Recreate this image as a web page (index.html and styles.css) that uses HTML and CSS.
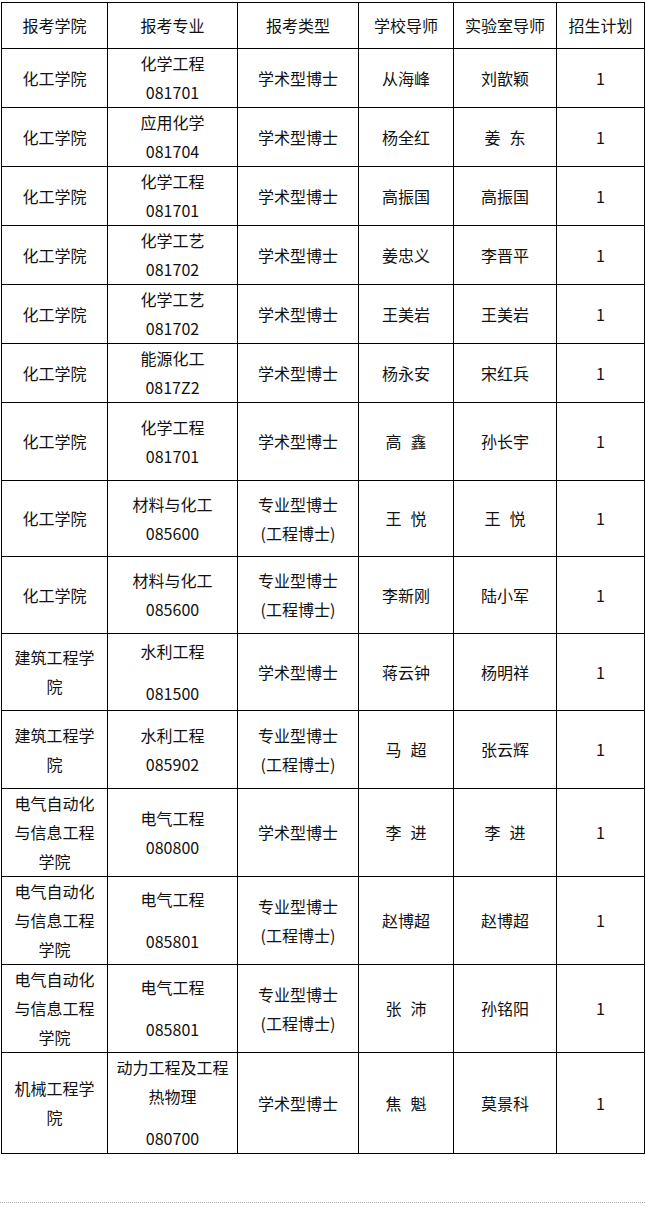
FILE: index.html
```html
<!DOCTYPE html>
<html lang="zh-CN">
<head>
<meta charset="utf-8">
<title>招生计划</title>
<link rel="stylesheet" href="styles.css">
</head>
<body>
<div class="page">
<table class="plan">
  <colgroup>
    <col class="c1"><col class="c2"><col class="c3"><col class="c4"><col class="c5"><col class="c6">
  </colgroup>
  <thead>
    <tr class="h-head">
      <th>报考学院</th><th>报考专业</th><th>报考类型</th><th>学校导师</th><th>实验室导师</th><th>招生计划</th>
    </tr>
  </thead>
  <tbody>
    <tr class="h-a"><td>化工学院</td><td>化学工程<br>081701</td><td>学术型博士</td><td>从海峰</td><td>刘歆颖</td><td>1</td></tr>
    <tr class="h-a"><td>化工学院</td><td>应用化学<br>081704</td><td>学术型博士</td><td>杨全红</td><td>姜<span class="sp"> </span>东</td><td>1</td></tr>
    <tr class="h-a"><td>化工学院</td><td>化学工程<br>081701</td><td>学术型博士</td><td>高振国</td><td>高振国</td><td>1</td></tr>
    <tr class="h-a"><td>化工学院</td><td>化学工艺<br>081702</td><td>学术型博士</td><td>姜忠义</td><td>李晋平</td><td>1</td></tr>
    <tr class="h-a"><td>化工学院</td><td>化学工艺<br>081702</td><td>学术型博士</td><td>王美岩</td><td>王美岩</td><td>1</td></tr>
    <tr class="h-a"><td>化工学院</td><td>能源化工<br>0817Z2</td><td>学术型博士</td><td>杨永安</td><td>宋红兵</td><td>1</td></tr>
    <tr class="h-b"><td>化工学院</td><td>化学工程<br>081701</td><td>学术型博士</td><td>高<span class="sp"> </span>鑫</td><td>孙长宇</td><td>1</td></tr>
    <tr class="h-c"><td>化工学院</td><td>材料与化工<br>085600</td><td>专业型博士<br>(工程博士)</td><td>王<span class="sp"> </span>悦</td><td>王<span class="sp"> </span>悦</td><td>1</td></tr>
    <tr class="h-d"><td>化工学院</td><td>材料与化工<br>085600</td><td>专业型博士<br>(工程博士)</td><td>李新刚</td><td>陆小军</td><td>1</td></tr>
    <tr class="h-d"><td>建筑工程学院</td><td>水利工程<div class="gap"></div>081500</td><td>学术型博士</td><td>蒋云钟</td><td>杨明祥</td><td>1</td></tr>
    <tr class="h-b"><td>建筑工程学院</td><td>水利工程<br>085902</td><td>专业型博士<br>(工程博士)</td><td>马<span class="sp"> </span>超</td><td>张云辉</td><td>1</td></tr>
    <tr class="h-e"><td>电气自动化与信息工程学院</td><td>电气工程<br>080800</td><td>学术型博士</td><td>李<span class="sp"> </span>进</td><td>李<span class="sp"> </span>进</td><td>1</td></tr>
    <tr class="h-f"><td>电气自动化与信息工程学院</td><td>电气工程<div class="gap"></div>085801</td><td>专业型博士<br>(工程博士)</td><td>赵博超</td><td>赵博超</td><td>1</td></tr>
    <tr class="h-e"><td>电气自动化与信息工程学院</td><td>电气工程<div class="gap"></div>085801</td><td>专业型博士<br>(工程博士)</td><td>张<span class="sp"> </span>沛</td><td>孙铭阳</td><td>1</td></tr>
    <tr class="h-g"><td>机械工程学院</td><td>动力工程及工程热物理<div class="gap"></div>080700</td><td>学术型博士</td><td>焦<span class="sp"> </span>魁</td><td>莫景科</td><td>1</td></tr>
  </tbody>
</table>
<div class="divider"></div>
</div>
</body>
</html>
```

FILE: styles.css
```css
html, body {
  margin: 0;
  padding: 0;
  background: #ffffff;
}

.page {
  padding: 2px 1px 0 1px;
  font-family: "Noto Sans CJK SC", "Noto Sans", sans-serif;
  color: #111111;
}

.plan {
  border-collapse: collapse;
  table-layout: fixed;
  width: 643px;
  font-size: 16px;
  line-height: 29px;
}

.c1 { width: 106px; }
.c2 { width: 130px; }
.c3 { width: 121px; }
.c4 { width: 95px; }
.c5 { width: 103px; }
.c6 { width: 88px; }

.plan th,
.plan td {
  border: 1px solid #000000;
  padding: 0 8px;
  text-align: center;
  vertical-align: middle;
  font-weight: normal;
}

.sp {
  display: inline-block;
  width: 9px;
}

.h-head { height: 46px; }
.h-a { height: 59px; }
.h-b { height: 78px; }
.h-c { height: 76px; }
.h-d { height: 77px; }
.h-e { height: 88px; }
.h-f { height: 87px; }
.h-g { height: 101px; }

.gap { height: 13px; }

.divider {
  margin-top: 48px;
  border-top: 1px dotted #a8a8a8;
  margin-left: -1px;
  margin-right: -1px;
}
```
